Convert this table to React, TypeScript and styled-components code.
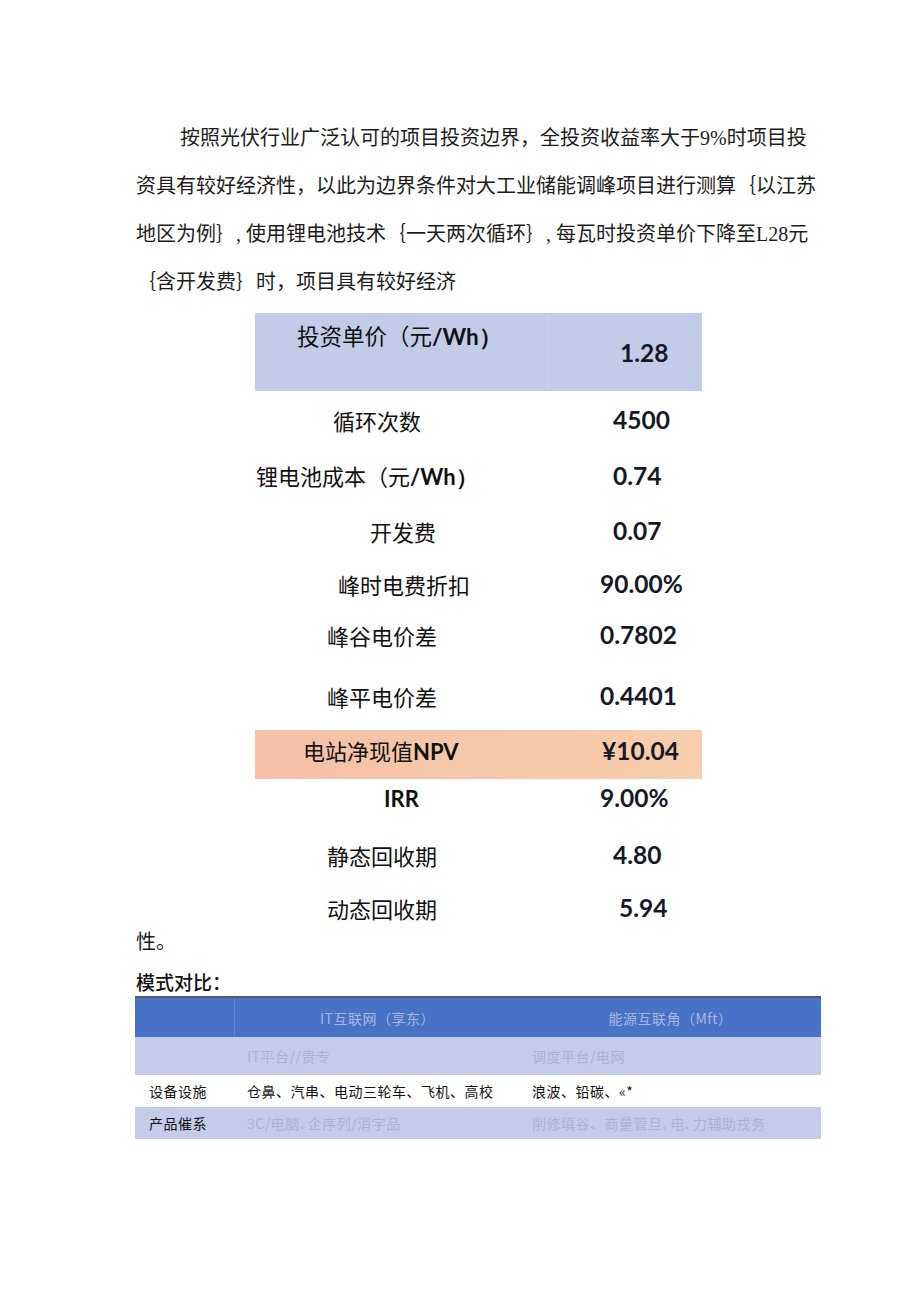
import styled, { createGlobalStyle } from "styled-components";

const GlobalStyle = createGlobalStyle`
  body {
    margin: 0;
    background: #ffffff;
  }
`;

const SERIF = `"Liberation Serif", "Noto Sans CJK SC", serif`;
const SANS = `"Noto Sans CJK SC", "Liberation Sans", sans-serif`;
const NUM = `Lato, "Liberation Sans", sans-serif`;

const Page = styled.div`
  width: 920px;
  min-height: 1301px;
  box-sizing: border-box;
  padding: 114px 0 0 136px;
  font-family: ${SERIF};
  color: #1c1c1c;
`;

const Paragraph = styled.div`
  font-size: 20px;
`;

const Line = styled.div<{ $indent?: number; $lh?: number; $mt?: number }>`
  height: ${(p) => p.$lh ?? 48}px;
  line-height: ${(p) => p.$lh ?? 48}px;
  margin-top: ${(p) => p.$mt ?? 0}px;
  padding-left: ${(p) => p.$indent ?? 0}px;
  white-space: nowrap;
`;

const DataTable = styled.div`
  margin: 7px 0 0 119px;
  width: 447px;
  display: flex;
  flex-direction: column;
  font-family: ${SANS};
  color: #111111;
`;

const DataRow = styled.div<{ $h: number; $bg?: string; $pb?: number }>`
  height: ${(p) => p.$h}px;
  display: grid;
  grid-template-columns: 294px 153px;
  align-items: center;
  padding-bottom: ${(p) => p.$pb ?? 0}px;
  box-sizing: border-box;
  background: ${(p) => p.$bg ?? "transparent"};
`;

const HeadRow = styled.div`
  height: 78px;
  display: grid;
  grid-template-columns: 294px 153px;
  align-items: start;
  background: #c2cbe8;
`;

const Label = styled.div<{ $x: number; $top?: number }>`
  padding-left: ${(p) => p.$x}px;
  padding-top: ${(p) => p.$top ?? 0}px;
  font-size: 22px;
  line-height: 30px;
  white-space: nowrap;
`;

const HeadLabel = styled(Label)`
  height: 78px;
  box-sizing: border-box;
  font-size: 22.5px;
  border-right: 1px solid rgba(255, 255, 255, 0.18);
`;

const Latin = styled.span`
  font-family: ${NUM};
  font-weight: 700;
`;

const Value = styled.div<{ $x: number; $top?: number }>`
  padding-left: ${(p) => p.$x}px;
  padding-top: ${(p) => p.$top ?? 0}px;
  font-family: ${NUM};
  font-weight: 700;
  font-size: 24.5px;
  line-height: 30px;
  color: #161826;
  white-space: nowrap;
`;

const Heading = styled.div`
  margin-top: 10px;
  height: 28px;
  line-height: 28px;
  font-family: ${SANS};
  font-size: 19px;
  font-weight: 500;
  color: #111111;
`;

const ModeTable = styled.div`
  width: 686px;
  margin-left: -1px;
  border-top: 2px solid #555a66;
  font-family: ${SANS};
  font-size: 14px;
`;

const ModeRow = styled.div<{ $h: number; $bg: string }>`
  height: ${(p) => p.$h}px;
  display: grid;
  grid-template-columns: 100px 285px 301px;
  align-items: center;
  background: ${(p) => p.$bg};
`;

const Cell = styled.div<{ $tone: "head" | "faint" | "dark"; $center?: boolean; $first?: boolean }>`
  height: 100%;
  display: flex;
  align-items: center;
  justify-content: ${(p) => (p.$center ? "center" : "flex-start")};
  padding-left: ${(p) => (p.$center ? 0 : p.$first ? 14 : 12)}px;
  box-sizing: border-box;
  white-space: nowrap;
  letter-spacing: 0.5px;
  color: ${(p) => (p.$tone === "head" ? "#a6b8e2" : p.$tone === "faint" ? "#abb1d4" : "#111111")};
  ${(p) => (p.$first && p.$tone === "head" ? "border-right: 1px solid rgba(255,255,255,0.15);" : "")}
`;

type Row = {
  label: React.ReactNode;
  lx: number;
  value: string;
  vx: number;
  h: number;
  bg?: string;
  pb?: number;
};

const rows: Row[] = [
  { label: "循环次数", lx: 78, value: "4500", vx: 64, h: 57 },
  {
    label: (
      <>
        锂电池成本（元<Latin>/Wh）</Latin>
      </>
    ),
    lx: 1,
    value: "0.74",
    vx: 64,
    h: 55,
  },
  { label: "开发费", lx: 115, value: "0.07", vx: 64, h: 56 },
  { label: "峰时电费折扣", lx: 83, value: "90.00%", vx: 51, h: 50 },
  { label: "峰谷电价差", lx: 72, value: "0.7802", vx: 51, h: 52 },
  { label: "峰平电价差", lx: 72, value: "0.4401", vx: 51, h: 69 },
  {
    label: (
      <>
        电站净现值<Latin>NPV</Latin>
      </>
    ),
    lx: 48,
    value: "¥10.04",
    vx: 53,
    h: 49,
    pb: 8,
    bg: "linear-gradient(90deg, #f4c0a6 0%, #f6c7a8 50%, #f8ceac 100%)",
  },
  { label: <Latin>IRR</Latin>, lx: 129, value: "9.00%", vx: 51, h: 37 },
  { label: "静态回收期", lx: 72, value: "4.80", vx: 64, h: 77 },
  { label: "动态回收期", lx: 72, value: "5.94", vx: 70, h: 24 },
];

const BLUE = "#4772c5";
const LAV = "#c6cbe9";

export default function App() {
  return (
    <Page>
      <GlobalStyle />
      <Paragraph>
        <Line $indent={44}>按照光伏行业广泛认可的项目投资边界，全投资收益率大于9%时项目投</Line>
        <Line>资具有较好经济性，以此为边界条件对大工业储能调峰项目进行测算｛以江苏</Line>
        <Line>地区为例｝, 使用锂电池技术｛一天两次循环｝, 每瓦时投资单价下降至L28元</Line>
        <Line>｛含开发费｝时，项目具有较好经济</Line>
      </Paragraph>

      <DataTable>
        <HeadRow>
          <HeadLabel $x={42} $top={7}>
            投资单价（元<Latin>/Wh）</Latin>
          </HeadLabel>
          <Value $x={71} $top={25}>
            1.28
          </Value>
        </HeadRow>
        {rows.map((r, i) => (
          <DataRow key={i} $h={r.h} $bg={r.bg} $pb={r.pb}>
            <Label $x={r.lx}>{r.label}</Label>
            <Value $x={r.vx}>{r.value}</Value>
          </DataRow>
        ))}
      </DataTable>

      <Paragraph>
        <Line $lh={32} $mt={9}>
          性。
        </Line>
      </Paragraph>
      <Heading>模式对比：</Heading>

      <ModeTable>
        <ModeRow $h={39} $bg={BLUE}>
          <Cell $tone="head" $first />
          <Cell $tone="head" $center>
            IT互联网（享东）
          </Cell>
          <Cell $tone="head" $center>
            能源互联角（Mft）
          </Cell>
        </ModeRow>
        <ModeRow $h={38} $bg={LAV}>
          <Cell $tone="faint" $first />
          <Cell $tone="faint">IT平台//贵专</Cell>
          <Cell $tone="faint">调度平台/电网</Cell>
        </ModeRow>
        <ModeRow $h={32} $bg="#ffffff">
          <Cell $tone="dark" $first>
            设备设施
          </Cell>
          <Cell $tone="dark">仓鼻、汽串、电动三轮车、飞机、高校</Cell>
          <Cell $tone="dark">浪波、铅碳、«*</Cell>
        </ModeRow>
        <ModeRow $h={32} $bg={LAV}>
          <Cell $tone="dark" $first>
            产品催系
          </Cell>
          <Cell $tone="faint">3C/电脑. 企序列/消宇品</Cell>
          <Cell $tone="faint">削修填谷、商量管旦. 电. 力辅助戎务</Cell>
        </ModeRow>
      </ModeTable>
    </Page>
  );
}
